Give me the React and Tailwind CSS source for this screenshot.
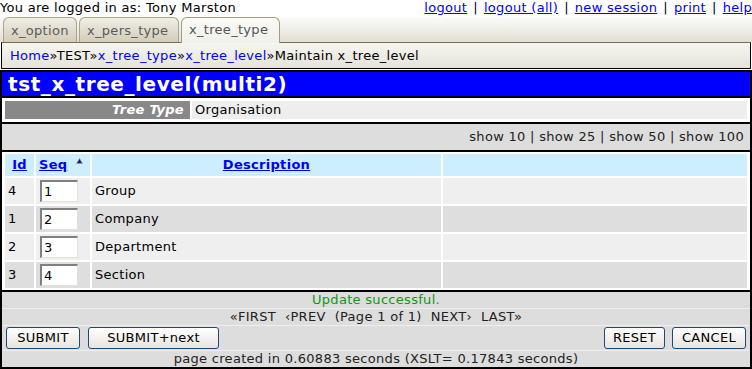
import React from "react";

const rows = [
  { id: 4, seq: 1, desc: "Group" },
  { id: 1, seq: 2, desc: "Company" },
  { id: 2, seq: 3, desc: "Department" },
  { id: 3, seq: 4, desc: "Section" },
];

const tabs = [
  { label: "x_option", w: "w-[74px]", active: false },
  { label: "x_pers_type", w: "w-[100px]", active: false },
  { label: "x_tree_type", w: "w-[99px]", active: true },
];

function Button({ children, w }) {
  return (
    <button
      className={`${w} h-[22px] rounded-[3px] border border-[#1c4a7e] bg-gradient-to-b from-white to-[#e6e4dc] text-[13px] leading-[20px] text-black`}
    >
      {children}
    </button>
  );
}

function Sep() {
  return <span className="px-[6px] text-black">|</span>;
}

export default function App() {
  return (
    <div className="w-[752px] h-[369px] overflow-hidden bg-white font-['DejaVu_Sans',sans-serif] text-[13px] tracking-[0.3px] text-black">
      {/* top line */}
      <div className="h-[17px] flex justify-between leading-[16px]">
        <span>You are logged in as: Tony Marston</span>
        <span className="flex">
          <a className="text-[#0000ff] underline">logout</a>
          <Sep />
          <a className="text-[#0000ff] underline">logout (all)</a>
          <Sep />
          <a className="text-[#0000ff] underline">new session</a>
          <Sep />
          <a className="text-[#0000ff] underline">print</a>
          <Sep />
          <a className="text-[#0000ff] underline">help</a>
        </span>
      </div>

      {/* tabs */}
      <div className="h-[25px] flex items-end gap-[2px] pl-[3px] bg-gradient-to-b from-[#fbfbf8] to-[#e2dfd4]">
        {tabs.map((t) =>
          t.active ? (
            <div
              key={t.label}
              className={`${t.w} h-[26px] -mb-px relative z-10 rounded-t-[6px] border border-b-0 border-[#a29c84] bg-gradient-to-b from-[#fbfbf8] to-[#f0efe8] pl-[7px] leading-[24px] text-[#555]`}
            >
              {t.label}
            </div>
          ) : (
            <div
              key={t.label}
              className={`${t.w} h-[25px] rounded-t-[6px] border border-b-0 border-[#aaa48a] bg-gradient-to-b from-[#f0eee6] to-[#d3cdb8] pl-[7px] leading-[25px] text-[#5a5a5a]`}
            >
              {t.label}
            </div>
          )
        )}
      </div>

      {/* breadcrumb */}
      <div className="mx-[1px] h-[27px] border border-black border-t-[#7a6a58] bg-gradient-to-b from-[#f6f6f1] to-[#e5e3da] pl-[8px] leading-[25px]">
        <a className="text-[#0000ff] no-underline">Home</a>»TEST»<a className="text-[#0000ff] no-underline">x_tree_type</a>»
        <a className="text-[#0000ff] no-underline">x_tree_level</a>»Maintain x_tree_level
      </div>

      {/* main box */}
      <div className="mt-[1px] h-[299px] border-2 border-black flex flex-col">
        <div className="h-[24px] bg-[#0000ff] border-b-2 border-black box-content pl-[6px] text-[20px] tracking-[0.6px] font-bold leading-[24px] text-white">
          tst_x_tree_level(multi2)
        </div>

        <div className="h-[23px] border-b-2 border-black box-content pt-[3px] pb-[2px] pl-[3px] pr-[3px] flex gap-[2px] box-border">
          <div className="w-[185px] h-[18px] bg-[#888888] text-right pr-[6px] font-bold italic text-white leading-[18px]">
            Tree Type
          </div>
          <div className="flex-1 h-[18px] bg-[#eeeeee] pl-[3px] leading-[18px]">Organisation</div>
        </div>

        <div className="h-[26px] border-b-2 border-black box-content bg-[#dddddd] text-right pr-[6px] leading-[26px] text-[#222]">
          show 10 | show 25 | show 50 | show 100
        </div>

        <div className="pt-[2px] pb-[2px] pl-[3px] pr-[3px] border-b-2 border-black grid grid-cols-[29px_54px_349px_1fr] gap-[2px]">
          <div className="h-[22px] bg-[#cceeff] flex items-center justify-center">
            <a className="font-bold text-[#0000ff] underline">Id</a>
          </div>
          <div className="h-[22px] bg-[#cceeff] flex items-center pl-[3px]">
            <a className="font-bold text-[#0000ff] underline">Seq</a>
            <svg className="ml-[9px] self-start mt-[4px]" width="7" height="6" viewBox="0 0 7 6">
              <path d="M3.5 0.5 L6.5 5.5 L0.5 5.5 Z" fill="#1a1a66" stroke="#9aa0b8" strokeWidth="0.6" />
            </svg>
          </div>
          <div className="h-[22px] bg-[#cceeff] flex items-center justify-center">
            <a className="font-bold text-[#0000ff] underline">Description</a>
          </div>
          <div className="h-[22px] bg-[#cceeff]" />

          {rows.map((r, i) => {
            const bg = i % 2 === 0 ? "bg-[#efefef]" : "bg-[#dedede]";
            return (
              <React.Fragment key={r.id}>
                <div className={`${bg} h-[26px] pl-[3px] leading-[26px]`}>{r.id}</div>
                <div className={`${bg} h-[26px] pl-[4px] flex items-center`}>
                  <div className="w-[38px] h-[22px] bg-white border-t-2 border-l-2 border-t-[#808080] border-l-[#808080] border-b border-r border-b-[#e4e2d8] border-r-[#e4e2d8] pl-[2px] leading-[19px]">
                    {r.seq}
                  </div>
                </div>
                <div className={`${bg} h-[26px] pl-[3px] leading-[26px]`}>{r.desc}</div>
                <div className={`${bg} h-[26px]`} />
              </React.Fragment>
            );
          })}
        </div>

        <div className="flex-1 bg-[#dddddd] flex flex-col">
          <div className="h-[16px] border-b border-[#efefef] box-content text-center leading-[16px] text-[#0a9a0a]">
            Update successful.
          </div>
          <div className="h-[16px] border-b border-[#efefef] box-content flex justify-center gap-[9px] leading-[16px] text-[#222]">
            <span>«FIRST</span>
            <span>‹PREV</span>
            <span>(Page 1 of 1)</span>
            <span>NEXT›</span>
            <span>LAST»</span>
          </div>
          <div className="h-[24px] border-b border-[#efefef] box-content flex items-center justify-between px-[4px]">
            <div className="flex gap-[8px]">
              <Button w="w-[74px]">SUBMIT</Button>
              <Button w="w-[131px]">SUBMIT+next</Button>
            </div>
            <div className="flex gap-[7px]">
              <Button w="w-[61px]">RESET</Button>
              <Button w="w-[74px]">CANCEL</Button>
            </div>
          </div>
          <div className="flex-1 text-center leading-[16px] text-[#222]">
            page created in 0.60883 seconds (XSLT= 0.17843 seconds)
          </div>
        </div>
      </div>
    </div>
  );
}
